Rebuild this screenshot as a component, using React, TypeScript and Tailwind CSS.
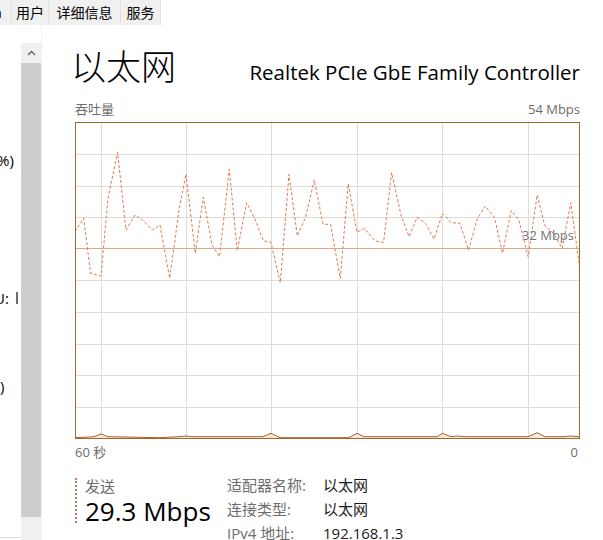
import React from "react";

const FONT = "font-['Open_Sans','Noto_Sans_CJK_SC',sans-serif]";

// page coords of the send trace, shifted into the chart's inner box later
const sendPts: [number, number][] = [
  [75, 231.7], [83.7, 218.3], [90.6, 273.3], [101, 276], [108, 198.3], [117.6, 152.3],
  [126, 230], [135, 215], [142.6, 220], [152.3, 230], [160, 225], [169.7, 278.3],
  [179, 210], [186, 174], [195.3, 253.3], [203.3, 197.3], [212, 245], [219.6, 256.7],
  [229.3, 169.3], [237.3, 250.7], [246.6, 202.7], [255.3, 220], [263.3, 240.7], [270.9, 242.3],
  [280.3, 282.7], [289, 174.3], [297.3, 236], [305.6, 217.3], [314.3, 180], [323, 224.3],
  [330.5, 224.3], [340.3, 278.3], [348.2, 184], [357, 232.3], [364.5, 228.3], [375, 241],
  [383.6, 242.3], [391.6, 172.7], [401, 215], [409, 236.7], [417.2, 217.3], [426.2, 224.3],
  [434, 239], [442.5, 213.3], [451.2, 222.7], [459.9, 223.3], [468.5, 250], [477.2, 219],
  [485.2, 206], [494.6, 217.7], [502.5, 253.3], [511.2, 210.7], [518.8, 220], [528.2, 256.7],
  [537.2, 195], [544.8, 225.7], [553.5, 233.3], [562.2, 248.3], [570.8, 202.7], [579, 263],
];

const recvPts: [number, number][] = [
  [75, 437.7], [94, 436.7], [101, 434], [108, 436.7], [160, 437.7], [178, 436.7], [186, 436],
  [191, 436.7], [263, 436.7], [271, 433.3], [280, 437.7], [334, 437.7], [349, 437.7],
  [357, 433.3], [364, 436.7], [437, 436.7], [442.5, 433.3], [451, 436.7], [458, 436],
  [465, 436.7], [528, 436.7], [537, 432.7], [545, 436.7], [565, 436.7], [570, 436], [579, 436.7],
];

const toSvg = (pts: [number, number][]) =>
  pts.map(([x, y]) => `${(x - 76).toFixed(1)},${(y - 123).toFixed(1)}`).join(" ");

const vLines = [25.5, 110.5, 195.5, 281.5, 366.5, 452.5];
const hLines = [31.5, 63.5, 94.5, 157.5, 189.5, 221.5, 252.5, 284.5];

function TabBar() {
  return (
    <div className="flex h-[25px] text-[14px] leading-[25px]">
      <div className="w-[12px] overflow-hidden bg-[#f0f0f0] border-r border-[#e2e2e2]">
        <span className="block -ml-[6px]">a</span>
      </div>
      <div className="w-[37px] text-center bg-[#f0f0f0] border-r border-[#e2e2e2]">用户</div>
      <div className="w-[72px] text-center bg-[#f0f0f0] border-r border-[#e2e2e2]">详细信息</div>
      <div className="w-[40px] text-center bg-[#f0f0f0] border-r border-[#e2e2e2]">服务</div>
    </div>
  );
}

function LeftStrip() {
  return (
    <div className="w-[21px] shrink-0 overflow-hidden flex flex-col text-[15px] leading-[20px] whitespace-nowrap">
      <div className="mt-[125px] -ml-[3px]">%)</div>
      <div className="mt-[118px] -ml-[6px] flex items-center">
        U:
        <span className="ml-[7px] inline-block w-[2px] h-[12px] bg-[#7a6a60]" />
      </div>
      <div className="mt-[68px]">)</div>
      <div className="mt-auto mb-[2px] h-px bg-[#dcdcdc]" />
    </div>
  );
}

function ScrollBar() {
  return (
    <div className="w-[21px] shrink-0 border-r border-[#f2f2f2] flex flex-col pt-[18px]">
      <div className="h-[20px] shrink-0 bg-[#f0f0f0] flex items-center justify-center">
        <svg width="9" height="6" viewBox="0 0 9 6">
          <polyline points="1,5 4.5,1.5 8,5" fill="none" stroke="#606060" strokeWidth="1.3" />
        </svg>
      </div>
      <div className="h-[454px] shrink-0 bg-[#cdcdcd]" />
      <div className="flex-1 bg-[#f0f0f0]" />
    </div>
  );
}

function Chart() {
  return (
    <div className="relative w-[505px] h-[317px] border border-[#a2672a]">
      <svg width="503" height="315" className="block">
        {vLines.map((x) => (
          <line key={`v${x}`} x1={x} y1={0} x2={x} y2={315} stroke="#e2dbd4" strokeWidth="1" />
        ))}
        {hLines.map((y) => (
          <line key={`h${y}`} x1={0} y1={y} x2={503} y2={y} stroke="#e2dbd4" strokeWidth="1" />
        ))}
        <line x1={0} y1={125.5} x2={503} y2={125.5} stroke="#e2a886" strokeWidth="1" />
        <polygon
          points={`${toSvg(recvPts)} 503,315 0,315`}
          fill="#f6dfcf"
          fillOpacity="0.7"
        />
        <polyline points={toSvg(recvPts)} fill="none" stroke="#a8602f" strokeWidth="1" />
        <polyline
          points={toSvg(sendPts)}
          fill="none"
          stroke="#e07a52"
          strokeWidth="1"
          strokeDasharray="3 2"
        />
      </svg>
      <span className="absolute right-[5px] top-[104px] text-[13px] leading-[17px] text-[#6f747a]">
        32 Mbps
      </span>
    </div>
  );
}

export default function App() {
  return (
    <div className={`w-[603px] h-[540px] overflow-hidden bg-white text-black ${FONT}`}>
      <TabBar />
      <div className="flex h-[515px]">
        <LeftStrip />
        <ScrollBar />
        <main className="ml-[33px] w-[505px] shrink-0">
          <div className="h-[72px] flex items-baseline justify-between pt-[20px]">
            <h1 className="text-[35px] leading-[44px] font-light -ml-[4px]">以太网</h1>
            <div className="text-[20.5px] leading-[28px]">Realtek PCIe GbE Family Controller</div>
          </div>
          <div className="h-[25px] flex items-center justify-between text-[13px] text-[#6d6d6d]">
            <span>吞吐量</span>
            <span>54 Mbps</span>
          </div>
          <Chart />
          <div className="h-[28px] flex items-center justify-between text-[13px] text-[#6d6d6d]">
            <span>60 秒</span>
            <span className="pr-[2px]">0</span>
          </div>
          <div className="mt-[6px] flex">
            <div className="w-[152px] shrink-0 mt-[5px]">
              <div className="h-[45px] border-l-2 border-dotted border-[#c07a62] pl-[8px]">
                <div className="text-[15px] leading-[16px] text-[#6d6d6d]">发送</div>
                <div className="mt-[2px] text-[26px] leading-[31px] whitespace-nowrap">29.3 Mbps</div>
              </div>
            </div>
            <div className="grid grid-cols-[96px_1fr] text-[15px] leading-[24px]">
              <span className="text-[#6d6d6d]">适配器名称:</span>
              <span className="text-[#1b1b1b]">以太网</span>
              <span className="text-[#6d6d6d]">连接类型:</span>
              <span className="text-[#1b1b1b]">以太网</span>
              <span className="text-[#6d6d6d]">IPv4 地址:</span>
              <span className="text-[#1b1b1b]">192.168.1.3</span>
            </div>
          </div>
        </main>
      </div>
    </div>
  );
}
